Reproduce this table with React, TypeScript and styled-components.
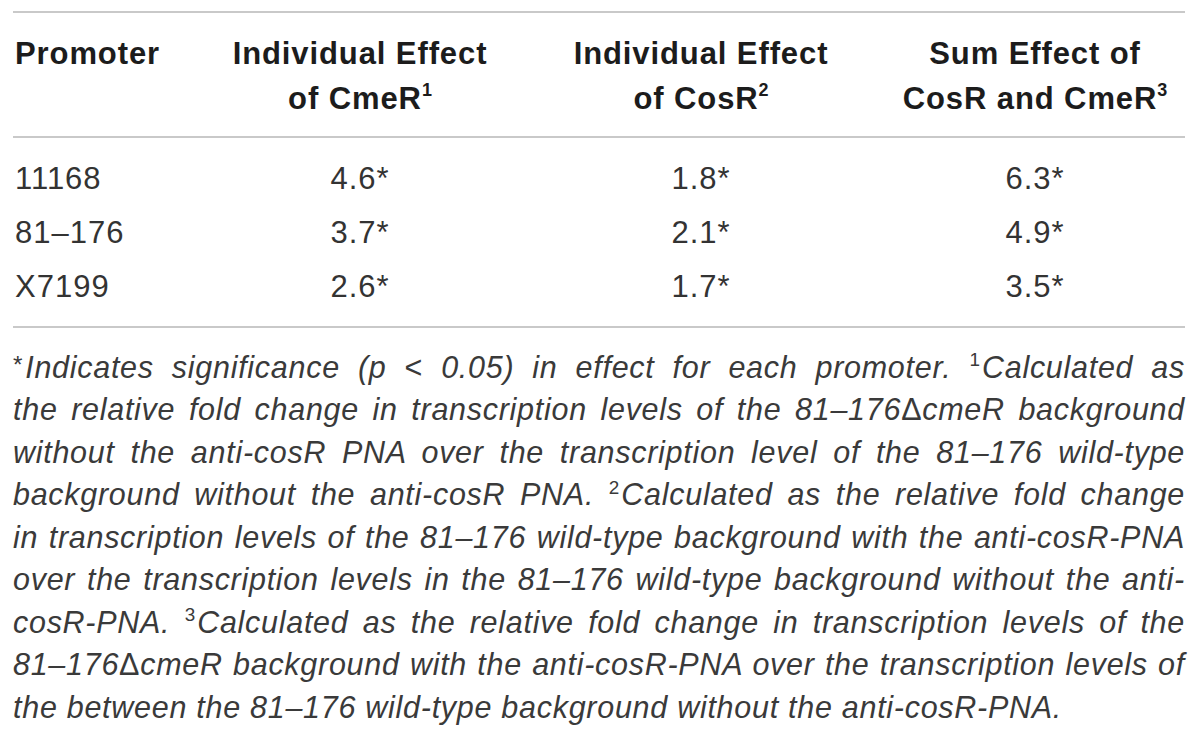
import React from 'react';
import styled, { createGlobalStyle } from 'styled-components';

const GlobalStyle = createGlobalStyle`
  html, body {
    margin: 0;
    padding: 0;
    background: #ffffff;
  }
`;

const Page = styled.div`
  width: 1172px;
  padding: 11px 0 0 13px;
  font-family: "Liberation Sans", Arial, Helvetica, sans-serif;
`;

const Table = styled.div`
  border-top: 2px solid #c9c9c9;
  border-bottom: 2px solid #c9c9c9;
`;

const Grid = styled.div`
  display: grid;
  grid-template-columns: 190px 314px 368px 300px;
`;

const HeadRow = styled(Grid)`
  padding: 18px 0 15px;
  border-bottom: 2px solid #c9c9c9;
`;

const Body = styled.div`
  padding: 14px 0 12px;
`;

const HeadCell = styled.div<{ $first?: boolean }>`
  font-size: 31px;
  line-height: 45px;
  font-weight: bold;
  letter-spacing: 0.9px;
  color: #1c1c1c;
  text-align: ${({ $first }) => ($first ? 'left' : 'center')};
  padding-left: ${({ $first }) => ($first ? '2px' : '0')};
`;

const Cell = styled.div<{ $first?: boolean }>`
  font-size: 31px;
  line-height: 54px;
  letter-spacing: 1px;
  color: #333333;
  text-align: ${({ $first }) => ($first ? 'left' : 'center')};
  padding-left: ${({ $first }) => ($first ? '2px' : '0')};
`;

const Sup = styled.sup`
  font-size: 0.58em;
  line-height: 0;
  vertical-align: 0.72em;
  letter-spacing: 0;
`;

const Note = styled.div`
  padding-top: 16px;
  font-size: 30.5px;
  line-height: 42.5px;
  letter-spacing: 0.72px;
  font-style: italic;
  color: #3a3a3a;
`;

const NoteLine = styled.div<{ $last?: boolean }>`
  text-align: ${({ $last }) => ($last ? 'left' : 'justify')};
  text-align-last: ${({ $last }) => ($last ? 'left' : 'justify')};
  white-space: nowrap;
`;

const Up = styled.span`
  font-style: normal;
`;

const NoteSup = styled.sup`
  font-style: normal;
  font-size: 0.62em;
  line-height: 0;
  vertical-align: 0.62em;
  margin-right: 2px;
  letter-spacing: 0;
`;

const Star = styled.span`
  font-style: normal;
  font-size: 0.8em;
  vertical-align: 0.2em;
  margin-right: 2px;
`;

const rows = [
  ['11168', '4.6*', '1.8*', '6.3*'],
  ['81–176', '3.7*', '2.1*', '4.9*'],
  ['X7199', '2.6*', '1.7*', '3.5*'],
];

export default function App() {
  return (
    <>
      <GlobalStyle />
      <Page>
        <Table>
          <HeadRow>
            <HeadCell $first>Promoter</HeadCell>
            <HeadCell>
              Individual Effect
              <br />
              of CmeR<Sup>1</Sup>
            </HeadCell>
            <HeadCell>
              Individual Effect
              <br />
              of CosR<Sup>2</Sup>
            </HeadCell>
            <HeadCell>
              Sum Effect of
              <br />
              CosR and CmeR<Sup>3</Sup>
            </HeadCell>
          </HeadRow>
          <Body>
            {rows.map((r) => (
              <Grid key={r[0]}>
                {r.map((v, i) => (
                  <Cell key={i} $first={i === 0}>{v}</Cell>
                ))}
              </Grid>
            ))}
          </Body>
        </Table>
        <Note>
          <NoteLine>
            <Star>*</Star>Indicates significance (p <Up>&lt;</Up> 0.05) in effect for each promoter. <NoteSup>1</NoteSup>Calculated as
          </NoteLine>
          <NoteLine>
            the relative fold change in transcription levels of the 81–176<Up>Δ</Up>cmeR background
          </NoteLine>
          <NoteLine>
            without the anti-cosR PNA over the transcription level of the 81–176 wild-type
          </NoteLine>
          <NoteLine>
            background without the anti-cosR PNA. <NoteSup>2</NoteSup>Calculated as the relative fold change
          </NoteLine>
          <NoteLine>
            in transcription levels of the 81–176 wild-type background with the anti-cosR-PNA
          </NoteLine>
          <NoteLine>
            over the transcription levels in the 81–176 wild-type background without the anti-
          </NoteLine>
          <NoteLine>
            cosR-PNA. <NoteSup>3</NoteSup>Calculated as the relative fold change in transcription levels of the
          </NoteLine>
          <NoteLine>
            81–176<Up>Δ</Up>cmeR background with the anti-cosR-PNA over the transcription levels of
          </NoteLine>
          <NoteLine $last>
            the between the 81–176 wild-type background without the anti-cosR-PNA.
          </NoteLine>
        </Note>
      </Page>
    </>
  );
}
